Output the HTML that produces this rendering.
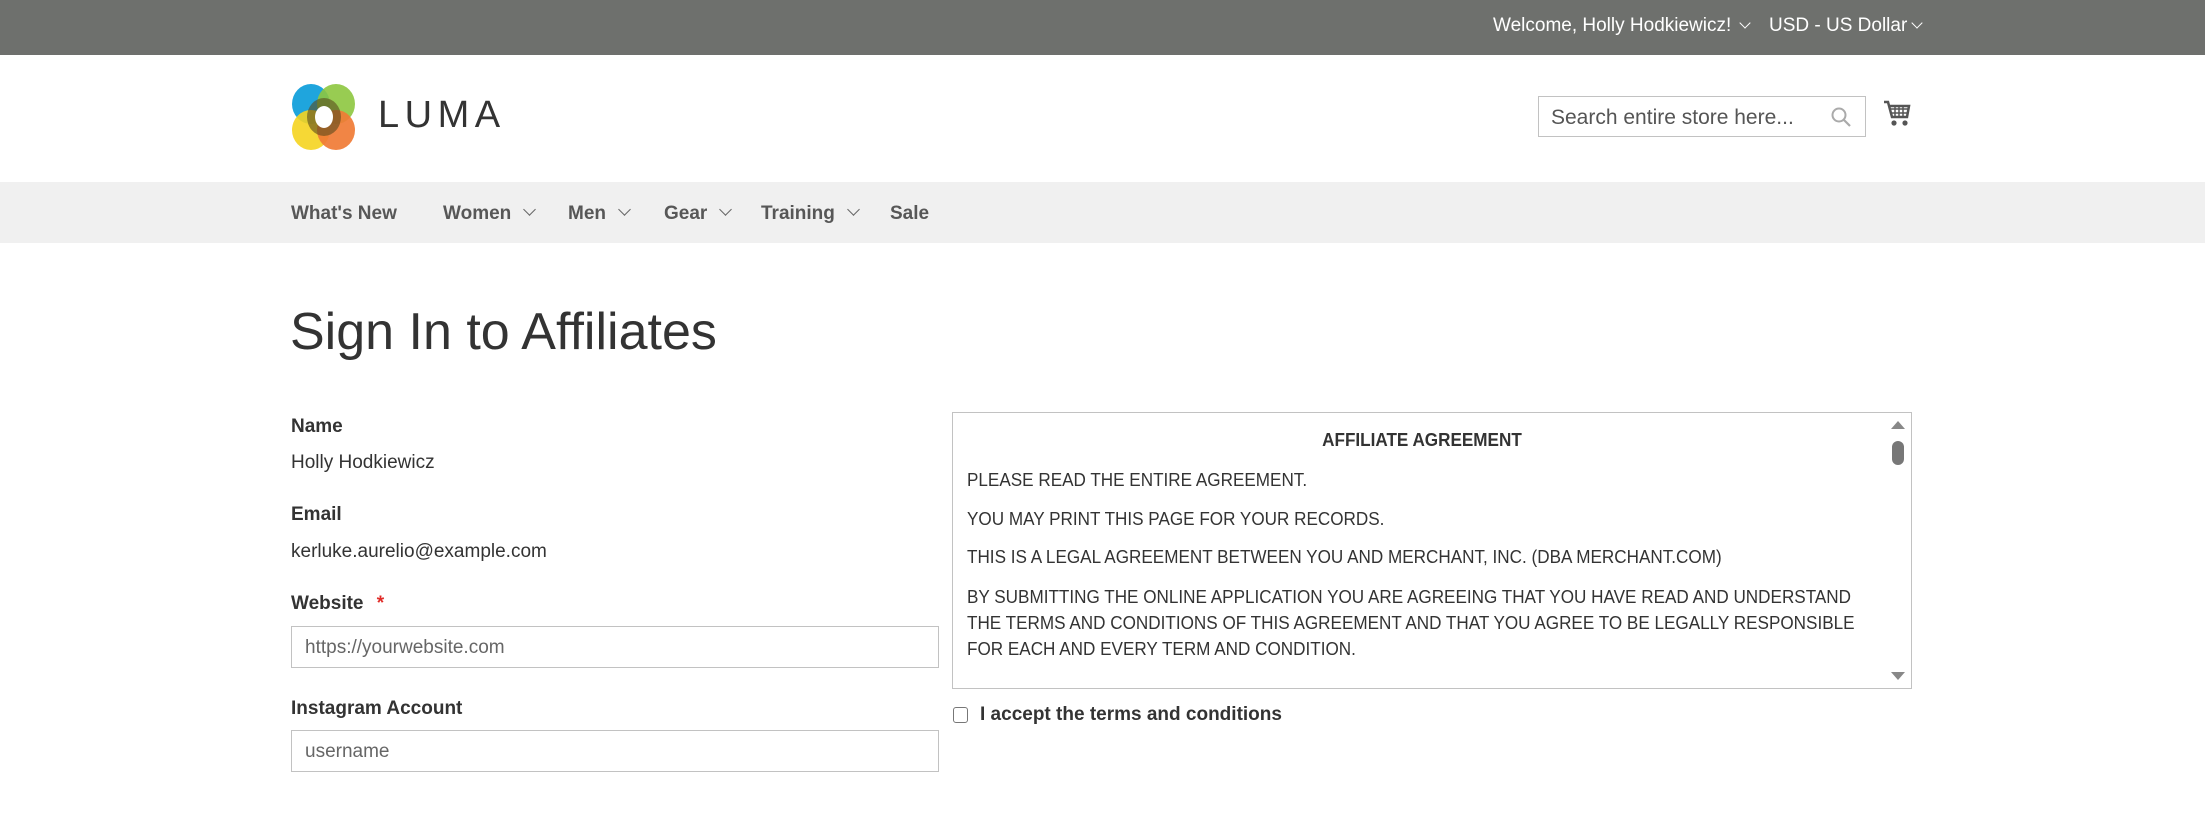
<!DOCTYPE html>
<html><head><meta charset="utf-8">
<style>
*{margin:0;padding:0;box-sizing:border-box}
body{width:2205px;height:834px;overflow:hidden;background:#fff;font-family:"Liberation Sans",sans-serif;color:#333;position:relative}
.a{position:absolute;white-space:nowrap}
.top{position:absolute;left:0;top:0;width:2205px;height:55px;background:#6e706d}
.nav{position:absolute;left:0;top:182px;width:2205px;height:61px;background:#f0f0f0}
.navi{font-weight:bold;font-size:19px;color:#575757;top:203px}
.chev{display:inline-block;width:9px;height:9px;border-right:1.6px solid #666;border-bottom:1.6px solid #666;transform:rotate(45deg);margin-left:14px;position:relative;top:-5px}
.lbl{font-weight:bold;font-size:19px;color:#333;left:291px}
.val{font-size:19px;color:#333;left:291px}
.inp{position:absolute;left:291px;width:648px;height:42px;border:1px solid #c2c2c2;background:#fff;font-size:19px;color:#666;padding:10px 13px}
.box{position:absolute;left:952px;top:412px;width:960px;height:277px;border:1px solid #c2c2c2;background:#fff;overflow:hidden}
.ag{position:absolute;left:14px;font-size:18.5px;color:#333;white-space:nowrap;transform:scaleX(0.925);transform-origin:0 0}
</style></head><body>
<div class="top"></div>
<div class="a" style="left:1493px;top:15px;font-size:19px;color:#fff">Welcome, Holly Hodkiewicz! <span style="display:inline-block;width:8px;height:8px;border-right:1.5px solid #fff;border-bottom:1.5px solid #fff;transform:rotate(45deg);position:relative;top:-4px;margin-left:4px"></span></div>
<div class="a" style="left:1769px;top:15px;font-size:19px;color:#fff">USD - US Dollar<span style="display:inline-block;width:8px;height:8px;border-right:1.5px solid #fff;border-bottom:1.5px solid #fff;transform:rotate(45deg);position:relative;top:-4px;margin-left:6px"></span></div>

<svg class="a" style="left:291px;top:83px" width="66" height="68" viewBox="0 0 66 68">
<ellipse cx="20" cy="21" rx="19" ry="20" fill="#1fa5dd"/>
<ellipse cx="45" cy="21" rx="19" ry="20" fill="#8dc63f" opacity=".9"/>
<ellipse cx="20" cy="47" rx="19" ry="20" fill="#f5d41f" opacity=".9"/>
<ellipse cx="45" cy="47" rx="19" ry="20" fill="#f07b35" opacity=".92"/>
<ellipse cx="33" cy="34" rx="17" ry="19" fill="#5a4a1d" opacity=".6"/>
<ellipse cx="33" cy="34" rx="9" ry="11" fill="#fff"/>
</svg>
<div class="a" style="left:378px;top:94px;font-size:38px;letter-spacing:5.5px;color:#333">LUMA</div>

<div style="position:absolute;left:1538px;top:96px;width:328px;height:41px;border:1px solid #c2c2c2"></div>
<div class="a" style="left:1551px;top:106px;font-size:21px;color:#555">Search entire store here...</div>
<svg class="a" style="left:1830px;top:106px" width="22" height="22" viewBox="0 0 22 22"><circle cx="9" cy="9" r="6.5" fill="none" stroke="#aaa" stroke-width="2"/><path d="M14 14 L20 20" stroke="#aaa" stroke-width="2.2"/></svg>
<svg class="a" style="left:1883px;top:100px" width="28" height="27" viewBox="0 0 28 27"><path d="M1 2 H5 L9 17 H24 L26 6 H7" fill="none" stroke="#555" stroke-width="2.5"/><path d="M8 9H25M9 13H24M12 6V17M16 6V17M20 6V17" stroke="#555" stroke-width="1.5"/><circle cx="11" cy="23" r="2.6" fill="#555"/><circle cx="22" cy="23" r="2.6" fill="#555"/></svg>

<div class="nav"></div>
<div class="a navi" style="left:291px">What's New</div>
<div class="a navi" style="left:443px">Women<span class="chev"></span></div>
<div class="a navi" style="left:568px">Men<span class="chev"></span></div>
<div class="a navi" style="left:664px">Gear<span class="chev"></span></div>
<div class="a navi" style="left:761px">Training<span class="chev"></span></div>
<div class="a navi" style="left:890px">Sale</div>

<div class="a" style="left:290px;top:302px;font-size:52px;color:#333;font-weight:300">Sign In to Affiliates</div>

<div class="a lbl" style="top:416px">Name</div>
<div class="a val" style="top:452px">Holly Hodkiewicz</div>
<div class="a lbl" style="top:504px">Email</div>
<div class="a val" style="top:541px">kerluke.aurelio@example.com</div>
<div class="a lbl" style="top:593px">Website <span style="color:#e02b27;margin-left:8px">*</span></div>
<div class="inp" style="top:626px">https://yourwebsite.com</div>
<div class="a lbl" style="top:698px">Instagram Account</div>
<div class="inp" style="top:730px">username</div>

<div class="box">
<div class="ag" style="left:0;width:1014px;text-align:center;top:16px;font-weight:bold">AFFILIATE AGREEMENT</div>
<div class="ag" style="top:56px">PLEASE READ THE ENTIRE AGREEMENT.</div>
<div class="ag" style="top:95px">YOU MAY PRINT THIS PAGE FOR YOUR RECORDS.</div>
<div class="ag" style="top:133px">THIS IS A LEGAL AGREEMENT BETWEEN YOU AND MERCHANT, INC. (DBA MERCHANT.COM)</div>
<div class="ag" style="top:173px">BY SUBMITTING THE ONLINE APPLICATION YOU ARE AGREEING THAT YOU HAVE READ AND UNDERSTAND</div>
<div class="ag" style="top:199px">THE TERMS AND CONDITIONS OF THIS AGREEMENT AND THAT YOU AGREE TO BE LEGALLY RESPONSIBLE</div>
<div class="ag" style="top:225px">FOR EACH AND EVERY TERM AND CONDITION.</div>
<div style="position:absolute;right:0;top:0;width:22px;height:275px;background:#fff"></div>
<div style="position:absolute;right:6px;top:8px;width:0;height:0;border-left:7px solid transparent;border-right:7px solid transparent;border-bottom:8px solid #888"></div>
<div style="position:absolute;right:7px;top:28px;width:12px;height:24px;border-radius:6px;background:#777"></div>
<div style="position:absolute;right:6px;top:259px;width:0;height:0;border-left:7px solid transparent;border-right:7px solid transparent;border-top:8px solid #888"></div>
</div>

<div style="position:absolute;left:953px;top:707px;width:15px;height:16px;border:1.5px solid #777;border-radius:3px"></div>
<div class="a" style="left:980px;top:704px;font-size:19px;color:#333;font-weight:bold">I accept the terms and conditions</div>
</body></html>
